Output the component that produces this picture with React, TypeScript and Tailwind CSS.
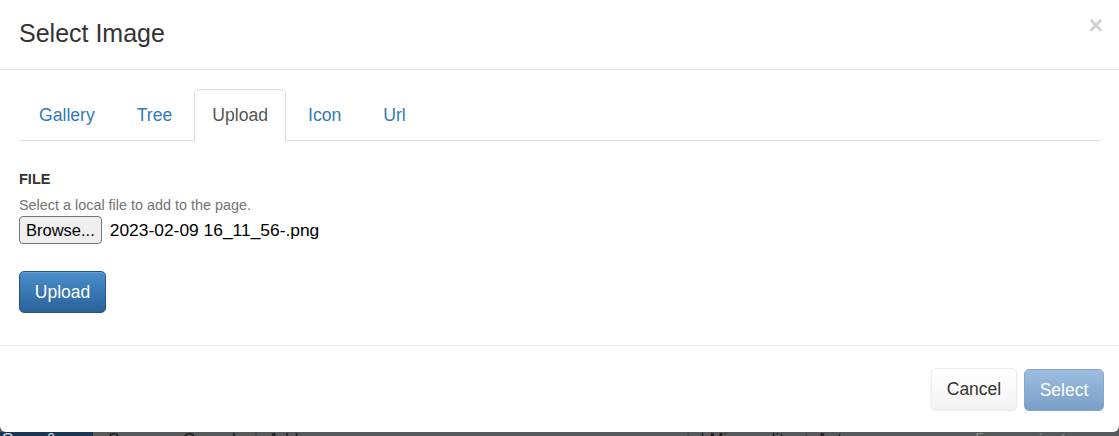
const tabs = ["Gallery", "Tree", "Upload", "Icon", "Url"];

const App = () => {
  return (
    <div className="w-[1119px] h-[436px] overflow-hidden bg-[#58595b] font-['Liberation_Sans',Arial,sans-serif]">
      {/* Modal */}
      <div className="h-[432px] w-[1119px] bg-white rounded-b-[6px] flex flex-col">
        {/* Header */}
        <div className="h-[70px] border-b border-[#e5e5e5] flex items-start justify-between pl-[19px] pr-[16px]">
          <h4 className="text-[25px] text-[#333] leading-[28px] mt-[19px]">Select Image</h4>
          <button className="text-[25px] font-bold leading-none text-black/20 mt-[13px]">×</button>
        </div>

        {/* Body */}
        <div className="h-[276px] border-b border-[#e5e5e5] px-[19px] pt-[19px]">
          <ul className="flex border-b border-[#ddd] h-[52px]">
            {tabs.map((t) => (
              <li key={t} className="mr-[2px] -mb-px">
                <a
                  className={
                    t === "Upload"
                      ? "flex items-center h-[52px] px-[17px] text-[17.6px] text-[#555] bg-white border border-[#ddd] border-b-transparent rounded-t-[5px]"
                      : "flex items-center h-[52px] px-[19px] text-[17.6px] text-[#337ab7] border border-transparent"
                  }
                >
                  {t}
                </a>
              </li>
            ))}
          </ul>

          <div className="pt-[30px]">
            <div className="text-[14.5px] font-bold text-[#333] leading-[17px]">FILE</div>
            <div className="text-[14.4px] text-[#737373] leading-[17px] mt-[9px]">Select a local file to add to the page.</div>
            <div className="flex items-center mt-[2px]">
              <span className="h-[28px] px-[6px] flex items-center bg-[#efefef] border border-[#767676] rounded-[4px] text-[16.5px] text-black">
                Browse...
              </span>
              <span className="ml-[8px] text-[17.4px] text-black">2023-02-09 16_11_56-.png</span>
            </div>
            <button className="mt-[27px] h-[42px] w-[87px] rounded-[5px] border border-[#245580] bg-gradient-to-b from-[#4a8fcc] to-[#2a619a] text-white text-[17.5px] shadow-[inset_0_1px_0_rgba(255,255,255,0.15)]">
              Upload
            </button>
          </div>
        </div>

        {/* Footer */}
        <div className="flex justify-end items-start gap-[7px] pt-[22px] pr-[15px]">
          <button className="h-[42px] w-[86px] rounded-[5px] border border-[#ececec] bg-gradient-to-b from-white to-[#f3f3f3] text-[#333] text-[17.5px] shadow-[0_1px_2px_rgba(0,0,0,0.08)]">
            Cancel
          </button>
          <button className="mt-[1px] h-[42px] w-[80px] rounded-[5px] border border-[#86a7cd] bg-gradient-to-b from-[#9bbde0] to-[#7a9fc8] text-white text-[17.5px]">
            Select
          </button>
        </div>
      </div>

      {/* Page toolbar peeking below the modal */}
      <div className="h-[4px] flex overflow-hidden text-[17px] leading-[20px]">
        <div className="w-[93px] bg-[#1c3553] text-[#cfd8e3] pl-[2px] -mt-[2px]">Save &amp; View</div>
        <div className="flex-1 flex text-[#1a1a1a] -mt-[2px]">
          <span className="ml-[15px]">Save</span>
          <span className="ml-[36px]">Cancel</span>
          <span className="ml-[18px] text-[#444]">|</span>
          <span className="ml-[10px]">Add summary...</span>
          <span className="ml-[300px] text-[#444]">|</span>
          <span className="ml-[10px]">| Minor edit</span>
          <span className="ml-[20px] text-[#444]">|</span>
          <span className="ml-[8px]">Autosave</span>
          <span className="ml-[6px] text-[#888]">every</span>
          <span className="ml-[40px] text-[#888]">5</span>
          <span className="ml-[40px] text-[#888]">minutes</span>
        </div>
      </div>
    </div>
  );
};

export default App;
